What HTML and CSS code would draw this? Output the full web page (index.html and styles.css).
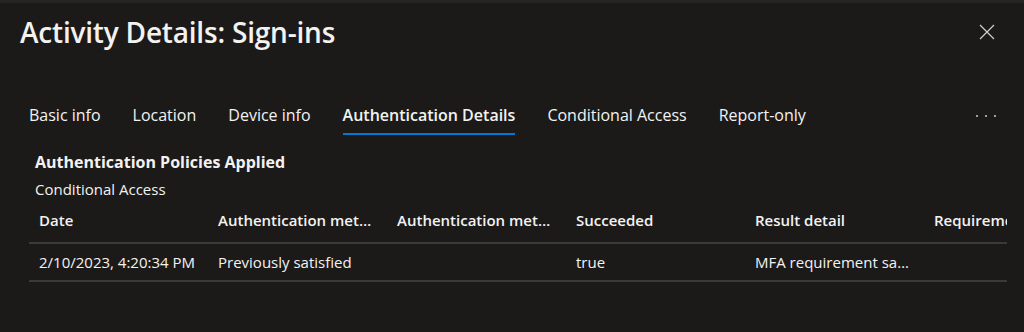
FILE: index.html
```html
<!DOCTYPE html>
<html lang="en">
<head>
    <meta charset="UTF-8">
    <meta name="viewport" content="width=device-width, initial-scale=1.0">
    <title>Activity Details: Sign-ins</title>
    <link rel="stylesheet" href="styles.css">
</head>
<body>
    <div class="panel">
        <div class="header">
            <h1 class="page-title">Activity Details: Sign-ins</h1>
            <button class="close-btn" aria-label="Close">
                <svg width="16" height="16" viewBox="0 0 16 16">
                    <path d="M1 1 L15 15 M15 1 L1 15" stroke="#d2d0ce" stroke-width="1.2" fill="none"/>
                </svg>
            </button>
        </div>

        <div class="tabs">
            <a href="#" class="tab">Basic info</a>
            <a href="#" class="tab">Location</a>
            <a href="#" class="tab">Device info</a>
            <a href="#" class="tab active">Authentication Details</a>
            <a href="#" class="tab">Conditional Access</a>
            <a href="#" class="tab">Report-only</a>
            <span class="more"><i></i><i></i><i></i></span>
        </div>

        <div class="section">
            <h2 class="section-title">Authentication Policies Applied</h2>
            <p class="section-sub">Conditional Access</p>
        </div>

        <div class="table-wrap">
            <table class="details">
                <thead>
                    <tr>
                        <th>Date</th>
                        <th>Authentication method</th>
                        <th>Authentication method detail</th>
                        <th>Succeeded</th>
                        <th>Result detail</th>
                        <th class="clip">Requirement</th>
                    </tr>
                </thead>
                <tbody>
                    <tr>
                        <td>2/10/2023, 4:20:34 PM</td>
                        <td>Previously satisfied</td>
                        <td></td>
                        <td>true</td>
                        <td>MFA requirement satisfied by claim in the token</td>
                        <td class="clip"></td>
                    </tr>
                </tbody>
            </table>
        </div>
    </div>
</body>
</html>
```

FILE: styles.css
```css
body {
    margin: 0;
    padding: 0;
    background-color: #1b1a19;
    font-family: "Open Sans", "Noto Sans", sans-serif;
    color: #f3f2f1;
}

.panel {
    border-top: 3px solid #252423;
    height: 329px;
    overflow: hidden;
}

.header {
    display: flex;
    justify-content: space-between;
    align-items: center;
    padding: 13px 29px 0 20px;
}

.page-title {
    margin: 0;
    font-size: 28px;
    font-weight: 600;
    line-height: 32px;
    letter-spacing: -0.2px;
}

.close-btn {
    background: none;
    border: none;
    padding: 0;
    width: 16px;
    height: 16px;
    cursor: pointer;
}

.tabs {
    display: flex;
    align-items: flex-end;
    gap: 32px;
    margin-top: 49px;
    padding-left: 29px;
}

.tab {
    text-decoration: none;
    color: #f3f2f1;
    font-size: 16px;
    line-height: 20px;
    padding: 8px 0;
    border-bottom: 2px solid transparent;
}

.tab.active {
    font-weight: 600;
    border-bottom-color: #0078d4;
}

.more {
    margin-left: auto;
    margin-right: 28px;
    display: flex;
    gap: 7px;
    align-self: center;
}

.more i {
    width: 2px;
    height: 2px;
    background-color: #a19f9d;
}

.section {
    padding-left: 35px;
    margin-top: 17px;
}

.section-title {
    margin: 0;
    font-size: 16px;
    font-weight: 700;
    line-height: 20px;
}

.section-sub {
    margin: 8px 0 0;
    font-size: 15px;
    line-height: 18px;
}

.table-wrap {
    margin-left: 29px;
    width: 978px;
    overflow: hidden;
}

.details {
    border-collapse: collapse;
    table-layout: fixed;
    width: 1074px;
    font-size: 15px;
}

.details th,
.details td {
    width: 159px;
    padding: 0 10px;
    text-align: left;
    white-space: nowrap;
    overflow: hidden;
    text-overflow: ellipsis;
    border-bottom: 2px solid #3b3a39;
}

.details th {
    height: 44px;
    font-weight: 600;
}

.details td {
    height: 36px;
}

.details .clip {
    text-overflow: clip;
}
```
